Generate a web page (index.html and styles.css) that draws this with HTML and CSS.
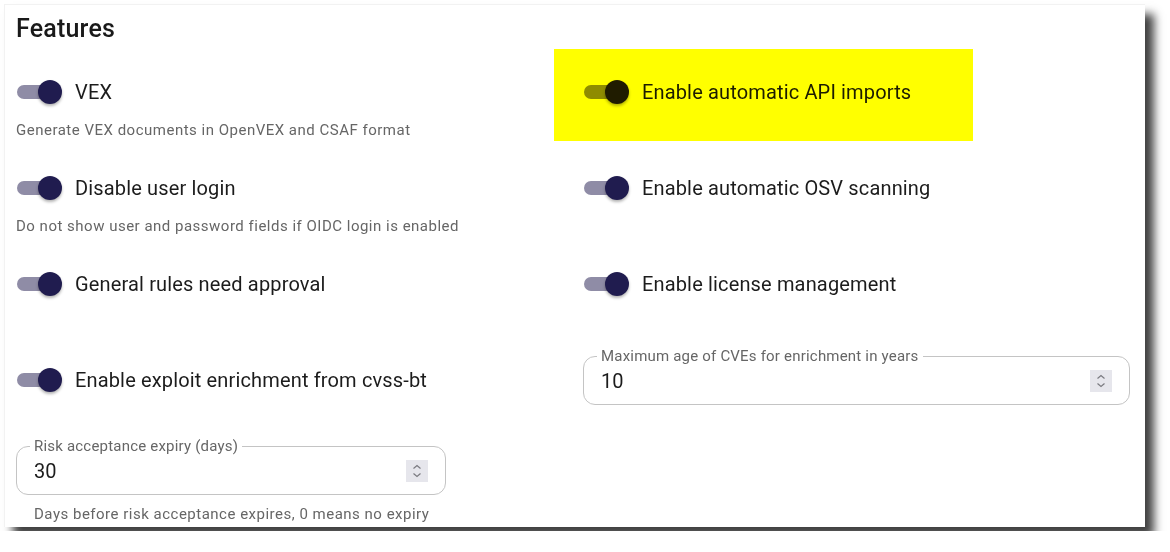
FILE: index.html
```html
<!DOCTYPE html>
<html>

<head>
  <title>Features</title>
  <link rel="stylesheet" href="styles.css">
</head>

<body>
  <div class="card">
    <h2 class="card-title">Features</h2>
    <div class="features">
      <div class="cell">
        <div class="switch">
          <span class="switch-control"><span class="track"></span><span class="thumb"></span></span>
          <span class="switch-label">VEX</span>
        </div>
        <div class="hint">Generate VEX documents in OpenVEX and CSAF format</div>
      </div>
      <div class="cell">
        <span class="highlight"></span>
        <div class="switch">
          <span class="switch-control"><span class="track"></span><span class="thumb"></span></span>
          <span class="switch-label">Enable automatic API imports</span>
        </div>
      </div>

      <div class="cell">
        <div class="switch">
          <span class="switch-control"><span class="track"></span><span class="thumb"></span></span>
          <span class="switch-label">Disable user login</span>
        </div>
        <div class="hint">Do not show user and password fields if OIDC login is enabled</div>
      </div>
      <div class="cell">
        <div class="switch">
          <span class="switch-control"><span class="track"></span><span class="thumb"></span></span>
          <span class="switch-label">Enable automatic OSV scanning</span>
        </div>
      </div>

      <div class="cell">
        <div class="switch">
          <span class="switch-control"><span class="track"></span><span class="thumb"></span></span>
          <span class="switch-label">General rules need approval</span>
        </div>
      </div>
      <div class="cell">
        <div class="switch">
          <span class="switch-control"><span class="track"></span><span class="thumb"></span></span>
          <span class="switch-label">Enable license management</span>
        </div>
      </div>

      <div class="cell">
        <div class="switch">
          <span class="switch-control"><span class="track"></span><span class="thumb"></span></span>
          <span class="switch-label">Enable exploit enrichment from cvss-bt</span>
        </div>
      </div>
      <div class="cell">
        <fieldset class="field">
          <legend>Maximum age of CVEs for enrichment in years</legend>
          <div class="field-row">
            <span class="field-value">10</span>
            <span class="spinner">
              <svg width="22" height="22" viewBox="0 0 22 22">
                <path d="M7.5 8.5 L11 5.5 L14.5 8.5" fill="none" stroke="#7a7a80" stroke-width="1.2" />
                <path d="M7.5 13.5 L11 16.5 L14.5 13.5" fill="none" stroke="#7a7a80" stroke-width="1.2" />
              </svg>
            </span>
          </div>
        </fieldset>
      </div>

      <div class="cell">
        <fieldset class="field field-small">
          <legend>Risk acceptance expiry (days)</legend>
          <div class="field-row">
            <span class="field-value">30</span>
            <span class="spinner">
              <svg width="22" height="22" viewBox="0 0 22 22">
                <path d="M7.5 8.5 L11 5.5 L14.5 8.5" fill="none" stroke="#7a7a80" stroke-width="1.2" />
                <path d="M7.5 13.5 L11 16.5 L14.5 13.5" fill="none" stroke="#7a7a80" stroke-width="1.2" />
              </svg>
            </span>
          </div>
        </fieldset>
        <div class="hint field-hint">Days before risk acceptance expires, 0 means no expiry</div>
      </div>
    </div>
  </div>
</body>

</html>
```

FILE: styles.css
```css
body {
  margin: 0;
  padding: 4px;
  background-color: #ffffff;
  font-family: Roboto, "Liberation Sans", sans-serif;
  color: #1c1c1c;
}

.card {
  box-sizing: border-box;
  width: 1141px;
  height: 523px;
  padding: 8px 15px 0 11px;
  background-color: #ffffff;
  border-top: 1px solid #f2f2f2;
  border-left: 1px solid #f2f2f2;
  box-shadow: 9px 10px 9px rgba(0, 0, 0, 0.75);
  overflow: hidden;
}

.card-title {
  margin: 0 0 23px 0;
  font-size: 25px;
  line-height: 32px;
  font-weight: 500;
  letter-spacing: 0.2px;
  color: #1a1a1a;
}

.features {
  display: grid;
  grid-template-columns: 547px 547px;
  grid-template-rows: 96px 96px 96px 90px auto;
  column-gap: 20px;
}

.cell {
  position: relative;
}

.highlight {
  position: absolute;
  left: -29px;
  top: -19px;
  width: 419px;
  height: 92px;
  background-color: #ffff00;
  mix-blend-mode: multiply;
  z-index: 2;
}

.switch {
  display: flex;
  align-items: center;
  height: 48px;
}

.switch-control {
  position: relative;
  width: 48px;
  height: 48px;
  flex-shrink: 0;
}

.track {
  position: absolute;
  left: 1px;
  top: 17px;
  width: 36px;
  height: 14px;
  border-radius: 7px;
  background-color: #8f8ca6;
}

.thumb {
  position: absolute;
  left: 22px;
  top: 12px;
  width: 24px;
  height: 24px;
  border-radius: 50%;
  background-color: #201c4f;
  box-shadow: 0 2px 3px rgba(0, 0, 0, 0.3);
}

.switch-label {
  margin-left: 11px;
  font-size: 20px;
  line-height: 28px;
  letter-spacing: 0.15px;
  color: #1c1c1c;
}

.hint {
  margin-top: 5px;
  font-size: 15px;
  line-height: 18px;
  letter-spacing: 0.5px;
  color: #666666;
}

.field {
  box-sizing: border-box;
  margin: -9px 0 0 0;
  padding: 0 17px 7px 17px;
  border: 1px solid #c4c4c4;
  border-radius: 12px;
  min-width: 0;
}

.field-small {
  width: 430px;
}

.field legend {
  margin-left: -4px;
  padding: 0 4px;
  font-size: 15px;
  line-height: 18px;
  letter-spacing: 0.2px;
  color: #666666;
}

.field-row {
  display: flex;
  align-items: center;
  justify-content: space-between;
  height: 32px;
}

.field-value {
  font-size: 20px;
  color: #1c1c1c;
}

.spinner {
  display: flex;
  width: 22px;
  height: 22px;
  background-color: #e6e6ec;
}

.field-hint {
  margin-top: 10px;
  padding-left: 18px;
}
```
